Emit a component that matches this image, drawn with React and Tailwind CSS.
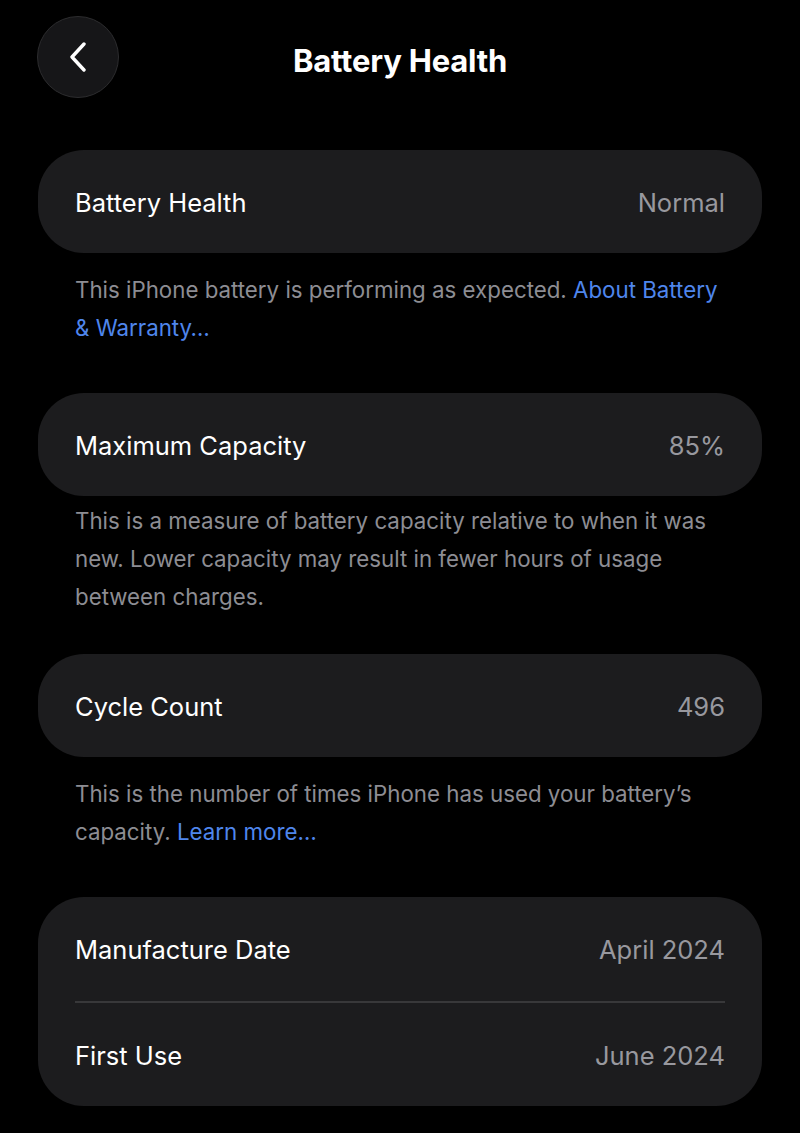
import React from "react";

function Row({ label, value, h = "h-[103px]" }) {
    return (
        <div className={`flex items-center justify-between ${h} px-[37px] pt-[3px]`}>
            <span className="text-[25.5px] text-white">{label}</span>
            <span className="text-[25.5px] text-[#98989e]">{value}</span>
        </div>
    );
}

function Card({ children }) {
    return <div className="rounded-[46px] bg-[#1c1c1e]">{children}</div>;
}

function Footer({ className, children }) {
    return (
        <p className={`pl-[37px] pr-[40px] text-[22.3px] leading-[38px] text-[#8d8d93] ${className}`}>
            {children}
        </p>
    );
}

export default function App() {
    return (
        <div
            className="min-h-[1133px] w-full bg-black px-[38px]"
            style={{ fontFamily: "Inter, 'Noto Sans', sans-serif" }}
        >
            <header className="relative flex items-center justify-center h-[116px] pt-[20px] pb-[14px]">
                <button className="absolute left-[-1px] top-[16px] flex items-center justify-center w-[82px] h-[82px] rounded-full bg-[#161618] border border-[#2c2c2e]">
                    <svg width="18" height="30" viewBox="0 0 18 30" fill="none">
                        <path d="M15 2 L3 15 L15 28" stroke="white" strokeWidth="3.4" strokeLinecap="round" strokeLinejoin="round" />
                    </svg>
                </button>
                <h1 className="text-[31px] font-bold text-white tracking-[-0.2px]">Battery Health</h1>
            </header>

            <div className="mt-[34px]">
                <Card>
                    <Row label="Battery Health" value="Normal" />
                </Card>
                <Footer className="mt-[18px]">
                    This iPhone battery is performing as expected.{" "}
                    <span className="text-[#4f86ec]">About Battery &amp; Warranty…</span>
                </Footer>
            </div>

            <div className="mt-[46px]">
                <Card>
                    <Row label="Maximum Capacity" value="85%" />
                </Card>
                <Footer className="mt-[6px]">
                    This is a measure of battery capacity relative to when it was new. Lower capacity may result in fewer hours of usage between charges.
                </Footer>
            </div>

            <div className="mt-[38px]">
                <Card>
                    <Row label="Cycle Count" value="496" />
                </Card>
                <Footer className="mt-[18px]">
                    This is the number of times iPhone has used your battery’s capacity.{" "}
                    <span className="text-[#4f86ec]">Learn more…</span>
                </Footer>
            </div>

            <div className="mt-[46px]">
                <Card>
                    <Row label="Manufacture Date" value="April 2024" h="h-[104px]" />
                    <div className="mx-[37px] h-[2px] bg-[#38383a]" />
                    <Row label="First Use" value="June 2024" />
                </Card>
            </div>
        </div>
    );
}
